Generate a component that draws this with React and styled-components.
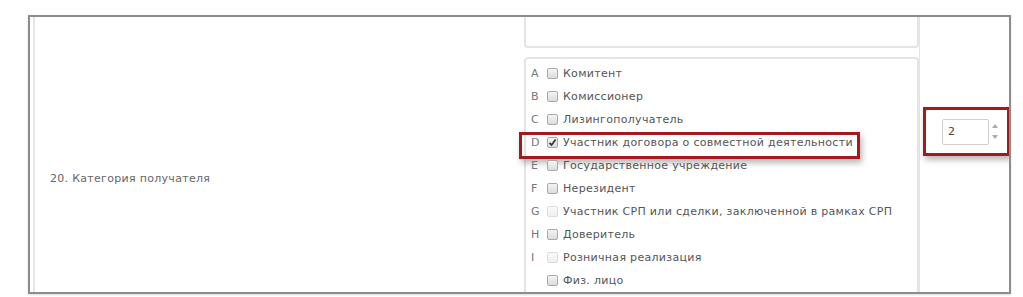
import React from "react";
import styled, { createGlobalStyle } from "styled-components";

const GlobalStyle = createGlobalStyle`
    html, body {
        margin: 0;
        padding: 0;
        background: #ffffff;
    }
    body {
        font-family: "DejaVu Sans", Verdana, sans-serif;
    }
`;

const options = [
    { letter: "A", label: "Комитент" },
    { letter: "B", label: "Комиссионер" },
    { letter: "C", label: "Лизингополучатель" },
    { letter: "D", label: "Участник договора о совместной деятельности", checked: true, marked: true },
    { letter: "E", label: "Государственное учреждение" },
    { letter: "F", label: "Нерезидент" },
    { letter: "G", label: "Участник СРП или сделки, заключенной в рамках СРП", disabled: true },
    { letter: "H", label: "Доверитель" },
    { letter: "I", label: "Розничная реализация", disabled: true },
    { letter: "", label: "Физ. лицо" },
];

const CheckMark = () => (
    <svg width="9" height="9" viewBox="0 0 9 9">
        <path d="M1.5 4.8 L3.6 7 L7.6 1.6" fill="none" stroke="#333" strokeWidth="1.7" />
    </svg>
);

const App = () => {
    return (
        <>
            <GlobalStyle />
            <PageWithStyled>
                <FrameWithStyled>
                    <RowWithStyled>
                        <LabelCellWithStyled>20. Категория получателя</LabelCellWithStyled>

                        <MiddleCellWithStyled>
                            <TopBoxWithStyled />
                            <ListBoxWithStyled>
                                {options.map((o) => (
                                    <OptionWithStyled key={o.label}>
                                        {o.marked && <HighlightWithStyled />}
                                        <LetterWithStyled>{o.letter}</LetterWithStyled>
                                        <CheckboxWithStyled $disabled={o.disabled}>
                                            {o.checked && <CheckMark />}
                                        </CheckboxWithStyled>
                                        <OptionTextWithStyled>{o.label}</OptionTextWithStyled>
                                    </OptionWithStyled>
                                ))}
                            </ListBoxWithStyled>
                        </MiddleCellWithStyled>

                        <RightCellWithStyled>
                            <SpinMarkWithStyled>
                                <NumberBoxWithStyled>
                                    <NumberValueWithStyled>2</NumberValueWithStyled>
                                    <SpinnerWithStyled>
                                        <ArrowWithStyled $up />
                                        <ArrowWithStyled />
                                    </SpinnerWithStyled>
                                </NumberBoxWithStyled>
                            </SpinMarkWithStyled>
                        </RightCellWithStyled>
                    </RowWithStyled>
                </FrameWithStyled>
            </PageWithStyled>
        </>
    );
};

const PageWithStyled = styled.div`
    width: 1023px;
    height: 297px;
    padding: 15px 0 0 28px;
    box-sizing: border-box;
`;

const FrameWithStyled = styled.div`
    width: 983px;
    height: 279px;
    box-sizing: border-box;
    border: 2px solid #8c8c8c;
    box-shadow: 0 1px 2px rgba(0, 0, 0, 0.15);
    overflow: hidden;
    background: #fff;
`;

const RowWithStyled = styled.div`
    display: grid;
    grid-template-columns: 489px 400px 90px;
    height: 323px;
`;

const LabelCellWithStyled = styled.div`
    margin-left: 3px;
    border-left: 2px solid #e6e6e6;
    padding-left: 15px;
    display: flex;
    align-items: center;
    font-size: 11px;
    letter-spacing: 0.3px;
    color: #666;
`;

const MiddleCellWithStyled = styled.div`
    padding-left: 5px;
    display: flex;
    flex-direction: column;
    gap: 9px;
`;

const TopBoxWithStyled = styled.div`
    margin-top: -10px;
    height: 41px;
    width: 395px;
    box-sizing: border-box;
    border: 2px solid #e4e4e4;
    border-radius: 4px;
`;

const ListBoxWithStyled = styled.div`
    width: 395px;
    flex: 1;
    box-sizing: border-box;
    border: 2px solid #e4e4e4;
    border-radius: 4px;
    padding: 3px 0 0 5px;
`;

const OptionWithStyled = styled.div`
    position: relative;
    display: flex;
    align-items: center;
    height: 23px;
    font-size: 11px;
    letter-spacing: 0.3px;
    color: #555;
`;

const HighlightWithStyled = styled.div`
    position: absolute;
    left: -12px;
    top: 1px;
    width: 341px;
    height: 27px;
    box-sizing: border-box;
    border: 3px solid #a3191c;
    box-shadow: 2px 4px 6px rgba(0, 0, 0, 0.28);
`;

const LetterWithStyled = styled.span`
    width: 16px;
    color: #777;
`;

const CheckboxWithStyled = styled.span`
    width: 11px;
    height: 11px;
    box-sizing: border-box;
    border: 1px solid ${(p) => (p.$disabled ? "#dcdcdc" : "#a9a9a9")};
    border-radius: 2px;
    background: ${(p) =>
        p.$disabled
            ? "linear-gradient(#fafafa, #f0f0f0)"
            : "linear-gradient(#f4f4f4, #dcdcdc)"};
    display: flex;
    align-items: center;
    justify-content: center;
    margin-right: 5px;
`;

const OptionTextWithStyled = styled.span`
    white-space: nowrap;
`;

const RightCellWithStyled = styled.div`
    border-left: 1px solid #e4e4e4;
    padding: 90px 0 0 3px;
`;

const SpinMarkWithStyled = styled.div`
    width: 87px;
    height: 49px;
    box-sizing: border-box;
    border: 3px solid #a3191c;
    box-shadow: 2px 4px 6px rgba(0, 0, 0, 0.28);
    display: flex;
    align-items: center;
    padding-left: 16px;
`;

const NumberBoxWithStyled = styled.div`
    display: flex;
    align-items: center;
    width: 60px;
    height: 26px;
`;

const NumberValueWithStyled = styled.div`
    width: 47px;
    height: 26px;
    box-sizing: border-box;
    border: 1px solid #cfcfcf;
    border-radius: 2px;
    padding-left: 5px;
    font-size: 11px;
    color: #444;
    display: flex;
    align-items: center;
`;

const SpinnerWithStyled = styled.div`
    display: flex;
    flex-direction: column;
    align-items: center;
    gap: 7px;
    width: 12px;
`;

const ArrowWithStyled = styled.span`
    width: 0;
    height: 0;
    border-left: 3px solid transparent;
    border-right: 3px solid transparent;
    ${(p) => (p.$up ? "border-bottom: 4px solid #aaa;" : "border-top: 4px solid #aaa;")}
`;

export default App;
